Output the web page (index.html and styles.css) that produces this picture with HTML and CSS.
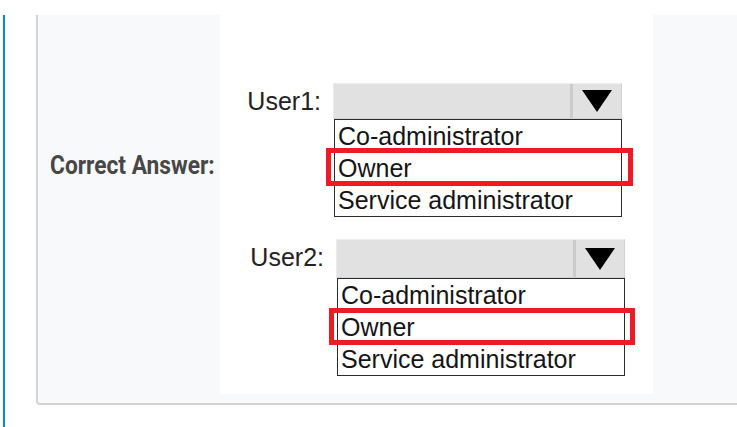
FILE: index.html
```html
<!DOCTYPE html>
<html>
<head>
<meta charset="utf-8">
<link rel="stylesheet" href="styles.css">
</head>
<body>
<div class="page">
  <div class="panel">
    <div class="answer-cell">
      <div class="answer-label">Correct Answer:</div>
    </div>
    <div class="figure">
      <div class="group">
        <span class="user">User1:</span>
        <div class="dropdown">
          <div class="select">
            <span class="select-field"></span>
            <span class="select-btn"><svg width="30" height="22" viewBox="0 0 30 22"><polygon points="0,0 30,0 15,22" fill="#000"/></svg></span>
          </div>
          <ul class="options">
            <li>Co-administrator</li>
            <li class="chosen">Owner</li>
            <li>Service administrator</li>
          </ul>
        </div>
      </div>
      <div class="group group--second">
        <span class="user">User2:</span>
        <div class="dropdown">
          <div class="select select--tall">
            <span class="select-field"></span>
            <span class="select-btn"><svg width="30" height="22" viewBox="0 0 30 22"><polygon points="0,0 30,0 15,22" fill="#000"/></svg></span>
          </div>
          <ul class="options">
            <li>Co-administrator</li>
            <li class="chosen">Owner</li>
            <li>Service administrator</li>
          </ul>
        </div>
      </div>
    </div>
  </div>
</div>
</body>
</html>
```
FILE: styles.css
```css
html, body {
  margin: 0;
  padding: 0;
  background: #fff;
}

.page {
  margin: 15px 0 0 3px;
  border-left: 2px solid #0a88e2;
  padding: 0 0 22px 31px;
}

.panel {
  display: flex;
  background: #f8f9fa;
  border-left: 2px solid #d3d3d3;
  border-bottom: 2px solid #d3d3d3;
  border-bottom-left-radius: 4px;
  padding-bottom: 9px;
}

.answer-cell {
  width: 170px;
  padding: 136px 0 0 12px;
}

.answer-label {
  font-family: Roboto, "Liberation Sans", sans-serif;
  font-weight: 700;
  font-size: 25px;
  line-height: 30px;
  color: #474747;
  white-space: nowrap;
  transform: scaleX(0.91);
  transform-origin: left center;
}

.figure {
  width: 433px;
  height: 379px;
  background: #fff;
  box-sizing: border-box;
  padding: 68px 0 0 0;
  display: flex;
  flex-direction: column;
  gap: 22px;
  font-family: "Liberation Sans", Arial, sans-serif;
  font-size: 25px;
  color: #151515;
}

.group {
  display: flex;
  align-items: flex-start;
  gap: 12px;
}

.group--second {
  padding-left: 3px;
}

.user {
  width: 101px;
  text-align: right;
  line-height: 36px;
  color: #222;
}

.dropdown {
  width: 289px;
}

.select {
  display: flex;
  height: 36px;
  box-sizing: border-box;
  border: 1px solid #d2d2d2;
  border-top-color: #ececec;
  border-left-color: #ececec;
  background: #e1e1e1;
}

.select--tall {
  height: 39px;
}

.select-field {
  flex: 1;
}

.select-btn {
  width: 48px;
  border-left: 3px solid #cbcbcb;
  display: flex;
  align-items: center;
  justify-content: center;
}

.options {
  list-style: none;
  margin: 0 0 0 1px;
  padding: 0;
  border: 1px solid #2b2b2b;
}

.options li {
  position: relative;
  height: 32px;
  line-height: 32px;
  padding-left: 3px;
  white-space: nowrap;
}

.chosen::after {
  content: "";
  position: absolute;
  left: -9px;
  right: -12px;
  top: -4px;
  bottom: -2px;
  border: 5px solid #ed1c24;
}

.group--second .chosen::after {
  left: -9px;
  right: -11px;
  top: -3px;
  bottom: -2px;
}
```
